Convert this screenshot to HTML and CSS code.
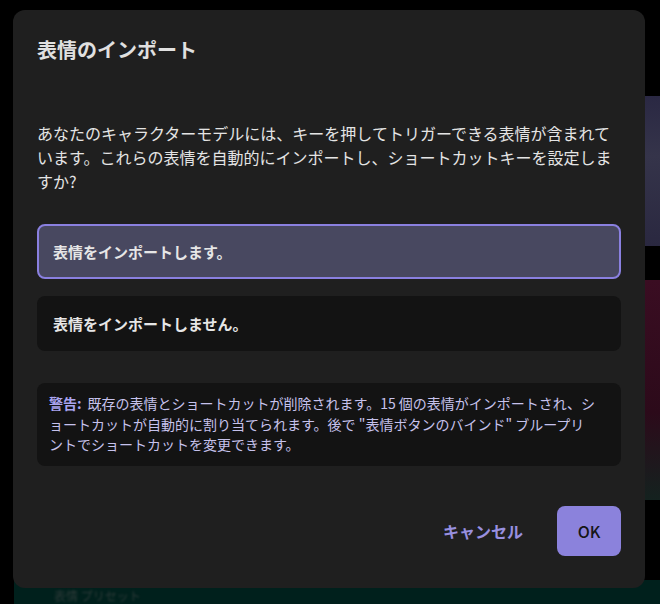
FILE: index.html
```html
<!DOCTYPE html>
<html lang="ja">
<head>
    <meta charset="UTF-8">
    <meta name="viewport" content="width=device-width, initial-scale=1.0">
    <title>表情のインポート</title>
    <link rel="stylesheet" href="styles.css">
</head>
<body>
    <div class="app">
        <div class="app-side">
            <div class="tile tile-purple"></div>
            <div class="tile tile-red"></div>
        </div>
        <div class="app-footer">
            <span class="blur-text">表情 プリセット</span>
        </div>
    </div>

    <div class="overlay">
        <div class="dialog">
            <h2 class="dialog-title">表情のインポート</h2>
            <p class="dialog-text">あなたのキャラクターモデルには、キーを押してトリガーできる表情が含まれています。これらの表情を自動的にインポートし、ショートカットキーを設定しますか?</p>

            <div class="options">
                <button class="option selected">表情をインポートします。</button>
                <button class="option">表情をインポートしません。</button>
            </div>

            <div class="warning">
                <strong>警告:</strong>既存の表情とショートカットが削除されます。15 個の表情がインポートされ、ショートカットが自動的に割り当てられます。後で "表情ボタンのバインド" ブループリントでショートカットを変更できます。
            </div>

            <div class="actions">
                <button class="btn btn-text">キャンセル</button>
                <button class="btn btn-primary">OK</button>
            </div>
        </div>
    </div>
</body>
</html>
```

FILE: styles.css
```css
* {
    box-sizing: border-box;
}
body {
    margin: 0;
    width: 660px;
    height: 604px;
    overflow: hidden;
    background-color: #000;
    font-family: "Noto Sans CJK JP", "Noto Sans", sans-serif;
    color: #e2e2e2;
}
.app {
    height: 100%;
    display: flex;
    flex-direction: column;
}
.app-side {
    flex: 1;
    display: flex;
    flex-direction: column;
    align-items: flex-end;
    padding-top: 96px;
}
.tile {
    width: 20px;
}
.tile-purple {
    height: 150px;
    background: linear-gradient(#2a2843, #35344a 40%, #2a2840);
}
.tile-red {
    height: 220px;
    margin-top: 34px;
    background: linear-gradient(#3a0d22, #2c0a1a 60%, #14221f);
}
.app-footer {
    height: 24px;
    margin-left: 14px;
    background-color: #00201c;
    padding: 10px 0 0 40px;
}
.blur-text {
    display: block;
    color: #2c3a38;
    font-size: 12px;
    line-height: 12px;
    filter: blur(1px);
}

.overlay {
    position: fixed;
    inset: 0;
    padding: 10px 15px 16px 13px;
}
.dialog {
    height: 100%;
    background-color: #1f1f1f;
    border-radius: 12px;
    padding: 24px 24px 32px;
    display: flex;
    flex-direction: column;
}
.dialog-title {
    margin: 0 0 55px;
    font-size: 20px;
    line-height: 32px;
    font-weight: 700;
    color: #e0e0e0;
}
.dialog-text {
    margin: 0 0 31px;
    font-size: 16px;
    line-height: 24px;
    color: #e4e4e4;
}
.options {
    display: flex;
    flex-direction: column;
    gap: 17px;
    margin-bottom: 32px;
}
.option {
    height: 55px;
    text-align: left;
    padding: 0 14px;
    border: 2px solid transparent;
    border-radius: 8px;
    background-color: #131313;
    color: #e6e6e6;
    font-family: inherit;
    font-size: 15px;
    font-weight: 700;
    cursor: pointer;
}
.option.selected {
    background-color: #484860;
    border-color: #8a80e0;
}
.warning {
    background-color: #131313;
    border-radius: 8px;
    padding: 10px 23px 11px 12px;
    font-size: 14px;
    line-height: 20.5px;
    color: #c6c2ec;
}
.warning strong {
    display: inline-block;
    margin-right: 6px;
    color: #aaa4f0;
}
.actions {
    margin-top: auto;
    display: flex;
    justify-content: flex-end;
    align-items: center;
    gap: 18px;
}
.btn {
    border: none;
    font-family: inherit;
    font-size: 16px;
    cursor: pointer;
}
.btn-text {
    background: none;
    color: #9890e0;
    font-weight: 700;
    padding: 0 16px;
}
.btn-primary {
    width: 64px;
    height: 50px;
    background-color: #8b82dc;
    color: #161616;
    border-radius: 8px;
    font-weight: 500;
}
```
